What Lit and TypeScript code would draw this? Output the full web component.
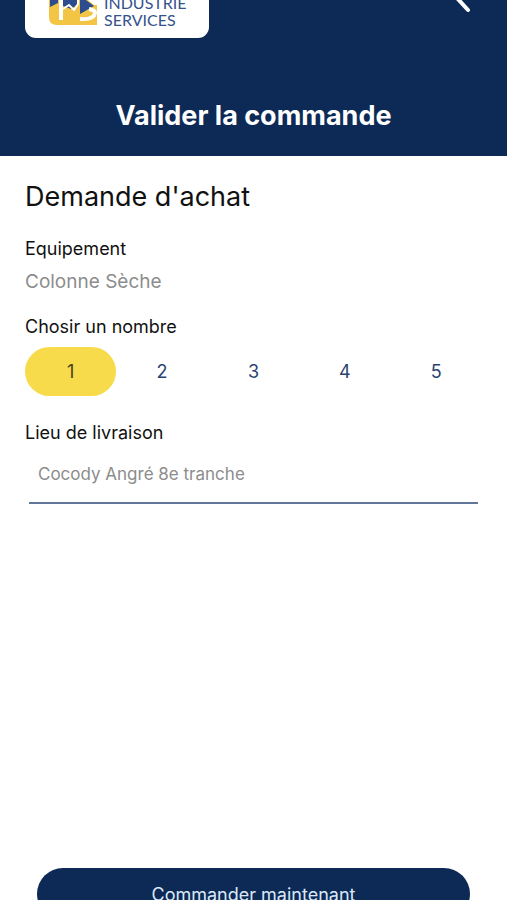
import { LitElement, html, css } from "lit";
import { customElement, state } from "lit/decorators.js";

@customElement("app-root")
export class AppRoot extends LitElement {
  static styles = css`
    :host {
      display: flex;
      flex-direction: column;
      height: 100vh;
      overflow: hidden;
      background: #fff;
      color: #111;
      font-family: Inter, "Liberation Sans", sans-serif;
    }
    header {
      background: #0d2a56;
      color: #fff;
      padding-bottom: 23px;
    }
    .bar {
      display: flex;
      justify-content: space-between;
      align-items: flex-start;
      padding: 0 34px 0 25px;
    }
    .logo {
      display: flex;
      align-items: flex-end;
      gap: 7px;
      box-sizing: border-box;
      width: 184px;
      height: 38px;
      padding: 0 24px 10px;
      overflow: hidden;
      border-radius: 0 0 11px 11px;
      background: #fff;
      color: #34528c;
      text-decoration: none;
      font: 16px/17px Lato, sans-serif;
    }
    .logo svg {
      flex: none;
      margin-bottom: 3px;
    }
    .name {
      display: flex;
      flex-direction: column;
    }
    .back {
      display: flex;
      padding: 0;
      border: 0;
      background: none;
      color: #fff;
    }
    h1 {
      margin: 61px 0 0;
      text-align: center;
      font-size: 27px;
      line-height: 34px;
      font-weight: 700;
    }
    main {
      flex: 1;
      padding: 24px 25px 0;
    }
    h2 {
      margin: 0 0 20px;
      font-size: 27px;
      line-height: 34px;
      font-weight: 400;
    }
    .label {
      display: block;
      padding: 0;
      font-size: 18px;
      line-height: 30px;
    }
    .value {
      margin: 0 0 12px;
      font-size: 19px;
      line-height: 36px;
      color: #8c8c8c;
    }
    fieldset {
      min-width: 0;
      margin: 0 0 22px;
      padding: 0;
      border: 0;
    }
    .choices {
      display: grid;
      grid-template-columns: repeat(5, 1fr);
      padding-top: 5px;
    }
    .choice {
      display: grid;
      place-items: center;
      height: 49px;
      border-radius: 25px;
      color: #2b4470;
      font-size: 18px;
    }
    .choice input {
      appearance: none;
      width: 0;
      height: 0;
      margin: 0;
      position: absolute;
    }
    .choice:has(input:checked) {
      background: #f8db4b;
      color: #45431f;
    }
    .place {
      display: block;
      box-sizing: border-box;
      width: 100%;
      height: 56px;
      padding: 0 13px 4px;
      border: 0;
      outline: 0;
      background: linear-gradient(#62769a, #62769a) bottom / calc(100% - 8px) 2px no-repeat;
      font: 17px Inter, "Liberation Sans", sans-serif;
    }
    .place::placeholder {
      color: #8c8c8c;
      opacity: 1;
    }
    footer {
      flex: none;
      height: 32px;
      padding: 0 37px;
    }
    .order {
      width: 100%;
      height: 52px;
      padding: 0;
      border: 0;
      border-radius: 26px;
      background: #0d2a56;
      color: #dce8f8;
      font: 18px Inter, "Liberation Sans", sans-serif;
    }
  `;

  @state() private count = 1;

  render() {
    return html`
      <header>
        <div class="bar">
          <a class="logo" href="#" aria-label="Industrie Services">
            <svg width="48" height="25" viewBox="0 0 48 25" aria-hidden="true">
              <path d="M0 0H48V25H8Q0 25 0 17Z" fill="#f3c544" />
              <path d="M1 0H9V3L1 7Z" fill="#2d4c8e" />
              <path d="M14 0H28V5L22 9L14 6Z" fill="#2d4c8e" />
              <path d="M31 0H37L45 6L31 14Z" fill="#2d4c8e" />
              <path d="M12 0V20" fill="none" stroke="#fff" stroke-width="4" />
              <path d="M14 9L20 5L25 10L29 4V0" fill="none" stroke="#fff" stroke-width="2" />
              <path d="M39 0L45 5H48V0Z" fill="#fff" />
              <path d="M40 9Q46 10 46 13Q45 20 31 19" fill="none" stroke="#fff" stroke-width="4" />
            </svg>
            <span class="name"><span>INDUSTRIE</span><span>SERVICES</span></span>
          </a>
          <button class="back" aria-label="Retour">
            <svg width="20" height="14" viewBox="0 0 20 14" aria-hidden="true">
              <path d="M4 -2L15 10" fill="none" stroke="currentColor" stroke-width="4" stroke-linecap="round" />
            </svg>
          </button>
        </div>
        <h1>Valider la commande</h1>
      </header>
      <main>
        <h2>Demande d'achat</h2>
        <span class="label">Equipement</span>
        <p class="value">Colonne Sèche</p>
        <fieldset>
          <legend class="label">Chosir un nombre</legend>
          <div class="choices">
            ${[1, 2, 3, 4, 5].map(
              (n) => html`<label class="choice">
                <input
                  type="radio"
                  name="count"
                  .checked=${this.count === n}
                  @change=${() => (this.count = n)}
                />${n}</label
              >`
            )}
          </div>
        </fieldset>
        <label class="label" for="place">Lieu de livraison</label>
        <input class="place" id="place" type="text" placeholder="Cocody Angré 8e tranche" />
      </main>
      <footer><button class="order">Commander maintenant</button></footer>
    `;
  }
}
